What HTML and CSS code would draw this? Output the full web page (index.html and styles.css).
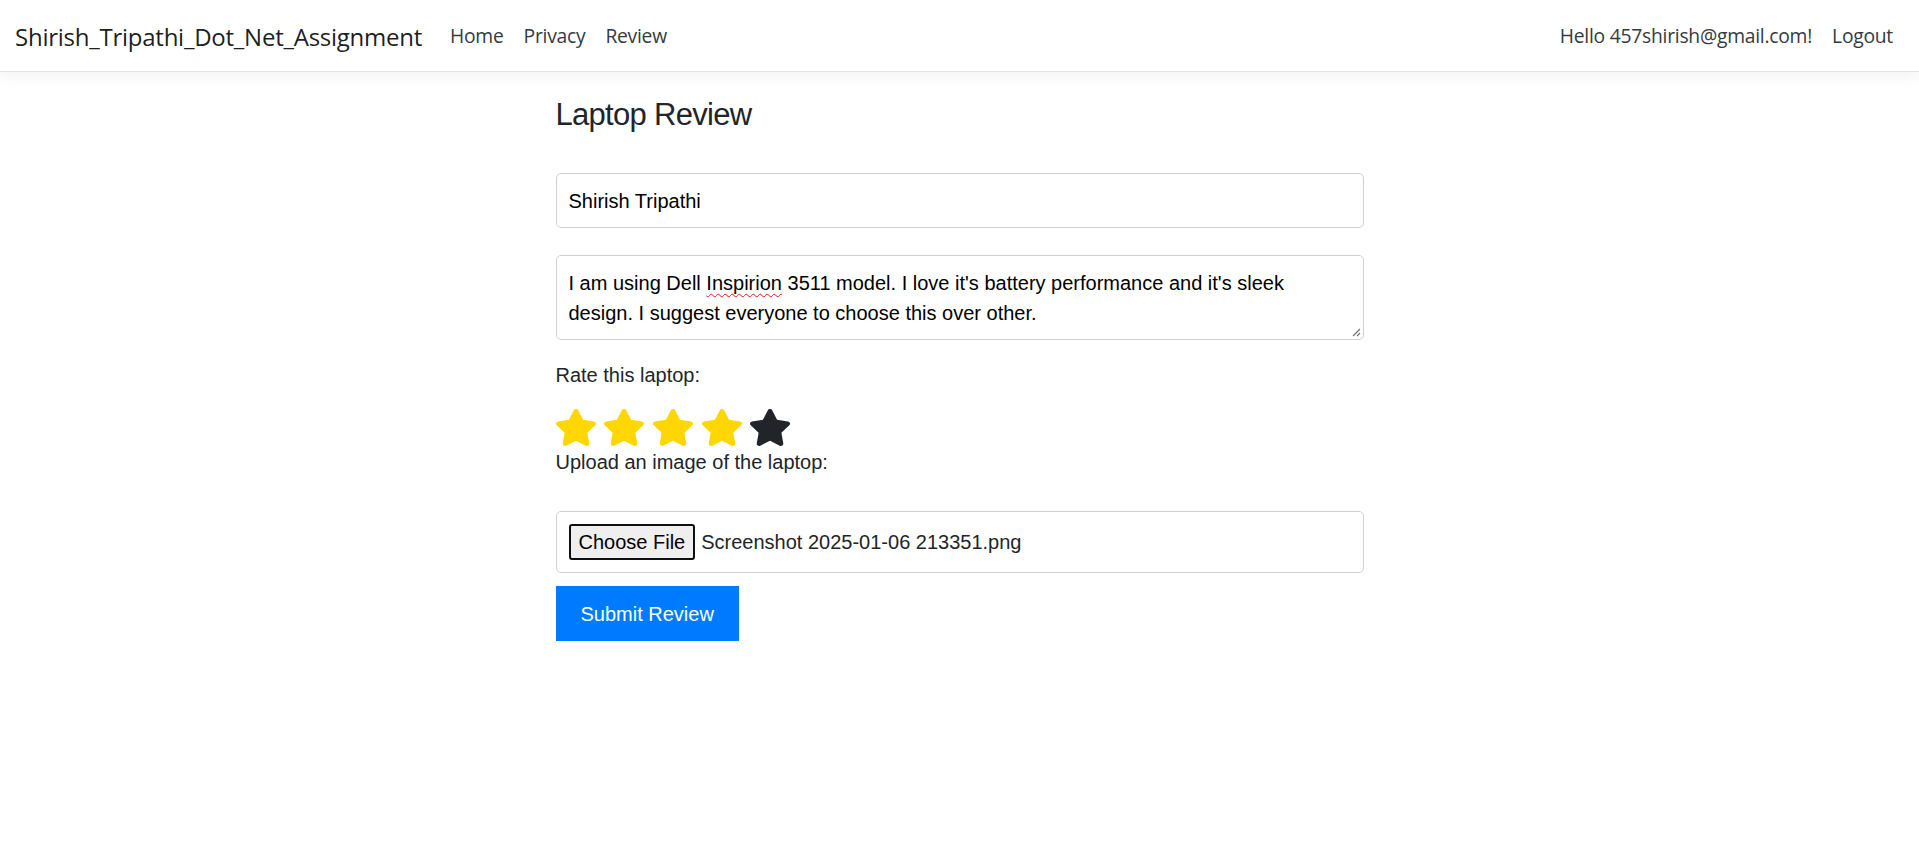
FILE: index.html
```html
<!DOCTYPE html>
<html lang="en">
<head>
<meta charset="utf-8">
<title>Laptop Review - Shirish_Tripathi_Dot_Net_Assignment</title>
<link rel="stylesheet" href="styles.css">
</head>
<body>
<header class="navbar">
  <a class="brand" href="#">Shirish_Tripathi_Dot_Net_Assignment</a>
  <nav class="nav-left">
    <a class="nav-link" href="#">Home</a>
    <a class="nav-link" href="#">Privacy</a>
    <a class="nav-link" href="#">Review</a>
  </nav>
  <nav class="nav-right">
    <span class="nav-link">Hello 457shirish@gmail.com!</span>
    <a class="nav-link" href="#">Logout</a>
  </nav>
</header>

<main class="container">
  <h2 class="title">Laptop Review</h2>
  <form class="review-form">
    <div class="field">Shirish Tripathi</div>
    <div class="field textarea">I am using Dell <span class="misspelled">Inspirion</span> 3511 model. I love it's battery performance and it's sleek design. I suggest everyone to choose this over other.<svg class="grip" width="9" height="9" viewBox="0 0 9 9"><path d="M8 1 L1 8 M8 5 L5 8" stroke="#6d6d6d" stroke-width="1.1" fill="none"/></svg></div>
    <div class="label rate-label">Rate this laptop:</div>
    <div class="stars">
      <svg class="star on" viewBox="24 0 528 512" preserveAspectRatio="none"><path d="M316.9 18C311.6 7 300.4 0 288.1 0s-23.4 7-28.8 18L195 150.3 51.4 171.5c-12 1.8-22 10.2-25.7 21.7s-.7 24.2 7.9 32.7L137.8 329 113.2 474.7c-2 12 3 24.2 12.9 31.3s23 8 33.8 2.3l128.3-68.5 128.3 68.5c10.8 5.7 23.9 4.9 33.8-2.3s14.9-19.3 12.9-31.3L438.5 329 542.7 225.9c8.6-8.5 11.7-21.2 7.9-32.7s-13.7-19.9-25.7-21.7L381.2 150.3 316.9 18z"/></svg>
      <svg class="star on" viewBox="24 0 528 512" preserveAspectRatio="none"><path d="M316.9 18C311.6 7 300.4 0 288.1 0s-23.4 7-28.8 18L195 150.3 51.4 171.5c-12 1.8-22 10.2-25.7 21.7s-.7 24.2 7.9 32.7L137.8 329 113.2 474.7c-2 12 3 24.2 12.9 31.3s23 8 33.8 2.3l128.3-68.5 128.3 68.5c10.8 5.7 23.9 4.9 33.8-2.3s14.9-19.3 12.9-31.3L438.5 329 542.7 225.9c8.6-8.5 11.7-21.2 7.9-32.7s-13.7-19.9-25.7-21.7L381.2 150.3 316.9 18z"/></svg>
      <svg class="star on" viewBox="24 0 528 512" preserveAspectRatio="none"><path d="M316.9 18C311.6 7 300.4 0 288.1 0s-23.4 7-28.8 18L195 150.3 51.4 171.5c-12 1.8-22 10.2-25.7 21.7s-.7 24.2 7.9 32.7L137.8 329 113.2 474.7c-2 12 3 24.2 12.9 31.3s23 8 33.8 2.3l128.3-68.5 128.3 68.5c10.8 5.7 23.9 4.9 33.8-2.3s14.9-19.3 12.9-31.3L438.5 329 542.7 225.9c8.6-8.5 11.7-21.2 7.9-32.7s-13.7-19.9-25.7-21.7L381.2 150.3 316.9 18z"/></svg>
      <svg class="star on" viewBox="24 0 528 512" preserveAspectRatio="none"><path d="M316.9 18C311.6 7 300.4 0 288.1 0s-23.4 7-28.8 18L195 150.3 51.4 171.5c-12 1.8-22 10.2-25.7 21.7s-.7 24.2 7.9 32.7L137.8 329 113.2 474.7c-2 12 3 24.2 12.9 31.3s23 8 33.8 2.3l128.3-68.5 128.3 68.5c10.8 5.7 23.9 4.9 33.8-2.3s14.9-19.3 12.9-31.3L438.5 329 542.7 225.9c8.6-8.5 11.7-21.2 7.9-32.7s-13.7-19.9-25.7-21.7L381.2 150.3 316.9 18z"/></svg>
      <svg class="star off" viewBox="24 0 528 512" preserveAspectRatio="none"><path d="M316.9 18C311.6 7 300.4 0 288.1 0s-23.4 7-28.8 18L195 150.3 51.4 171.5c-12 1.8-22 10.2-25.7 21.7s-.7 24.2 7.9 32.7L137.8 329 113.2 474.7c-2 12 3 24.2 12.9 31.3s23 8 33.8 2.3l128.3-68.5 128.3 68.5c10.8 5.7 23.9 4.9 33.8-2.3s14.9-19.3 12.9-31.3L438.5 329 542.7 225.9c8.6-8.5 11.7-21.2 7.9-32.7s-13.7-19.9-25.7-21.7L381.2 150.3 316.9 18z"/></svg>
    </div>
    <div class="label upload-label">Upload an image of the laptop:</div>
    <div class="field file-box">
      <span class="file-btn">Choose File</span>
      <span class="file-name">Screenshot 2025-01-06 213351.png</span>
    </div>
    <button type="button" class="submit">Submit Review</button>
  </form>
</main>
</body>
</html>
```

FILE: styles.css
```css
html, body {
  margin: 0;
  padding: 0;
  background: #ffffff;
}

body {
  font-family: "Liberation Sans", Arial, sans-serif;
  color: #212529;
}

a {
  text-decoration: none;
  color: inherit;
}

/* ---------- navbar ---------- */
.navbar {
  box-sizing: border-box;
  height: 72px;
  display: flex;
  align-items: center;
  padding: 0 16px 0 15px;
  background: #ffffff;
  border-bottom: 1px solid #dee2e6;
  box-shadow: 0 5px 15px rgba(0, 0, 0, 0.05);
  font-family: "Open Sans", "Noto Sans", sans-serif;
  color: #212529;
}

.brand {
  font-size: 24px;
  margin-right: 18px;
  color: rgba(0, 0, 0, 0.9);
  letter-spacing: -0.25px;
  padding-top: 2px;
}

.nav-left,
.nav-right {
  display: flex;
  align-items: center;
}

.nav-right {
  margin-left: auto;
}

.nav-link {
  font-size: 19.3px;
  padding: 0 10px;
  color: #343a40;
  letter-spacing: -0.25px;
}

/* ---------- main ---------- */
.container {
  width: 808px;
  margin: 0 auto;
  padding-top: 24px;
}

.title {
  margin: 0 0 39px;
  font-size: 31px;
  font-weight: 400;
  line-height: 38.4px;
  letter-spacing: -0.7px;
}

.review-form {
  display: flex;
  flex-direction: column;
  align-items: flex-start;
}

.field {
  box-sizing: border-box;
  width: 100%;
  border: 1px solid #cfcfcf;
  border-radius: 5px;
  padding: 11.5px 12px;
  font-size: 20px;
  line-height: 30px;
  color: #000000;
  margin-bottom: 27px;
}

.textarea {
  position: relative;
  height: 85px;
  margin-bottom: 20px;
}

.misspelled {
  text-decoration: underline wavy #e0161b;
  text-decoration-skip-ink: none;
  text-decoration-thickness: 1px;
  text-underline-offset: 3px;
}

.grip {
  position: absolute;
  right: 2px;
  bottom: 2px;
}

.label {
  font-size: 20px;
  line-height: 30px;
}

.stars {
  display: flex;
  gap: 8.7px;
  padding-top: 19px;
  height: 38px;
}

.star {
  width: 40px;
  height: 37px;
}

.star.on {
  fill: #ffd700;
}

.star.off {
  fill: #212529;
}

.upload-label {
  margin-bottom: 34px;
}

.file-box {
  display: flex;
  align-items: center;
  padding: 12px;
  line-height: normal;
  margin-bottom: 13px;
}

.file-btn {
  box-sizing: border-box;
  height: 36px;
  display: flex;
  align-items: center;
  padding: 0 8px;
  border: 2px solid #101010;
  border-radius: 3px;
  background: #efefef;
  color: #000000;
  font-size: 20px;
}

.file-name {
  margin-left: 6px;
  font-size: 20px;
  color: #212529;
}

.submit {
  border: none;
  border-radius: 0;
  background: #007bff;
  color: #ffffff;
  font-family: "Liberation Sans", Arial, sans-serif;
  font-size: 20px;
  line-height: 30px;
  padding: 12.5px 25px;
  margin: 0;
}
```
